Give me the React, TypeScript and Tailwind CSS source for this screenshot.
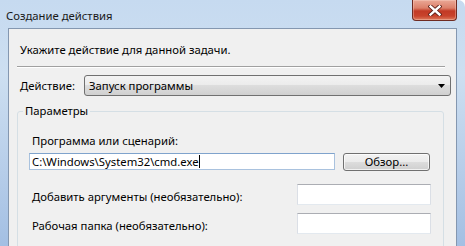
import React from 'react';

function CloseGlyph() {
  return (
    <svg width="14" height="11" viewBox="0 0 14 11">
      <path d="M2.5 1.5 L11.5 9.5 M11.5 1.5 L2.5 9.5" stroke="#5a1f18" strokeWidth="4.2" strokeLinecap="square" />
      <path d="M2.5 1.5 L11.5 9.5 M11.5 1.5 L2.5 9.5" stroke="#ffffff" strokeWidth="2.4" strokeLinecap="square" />
    </svg>
  );
}

export default function App() {
  return (
    <div className="w-[465px] h-[246px] overflow-hidden bg-white font-['Noto_Sans',sans-serif] text-[11.3px] leading-[16px] text-black">
      <div className="h-full flex flex-col rounded-tr-[7px] bg-[linear-gradient(180deg,#c6daf0_0%,#cddff1_30%,#b6cde9_70%,#a3bfe3_100%)]">
        {/* title bar */}
        <div className="h-[28px] flex items-start shrink-0">
          <span className="ml-[6px] mt-[8px] text-[#1a1a1a]">Создание действия</span>
          <div className="ml-auto mr-[8px] w-[45px] h-[21px] rounded-b-[4px] border border-t-0 border-[#6e2b22] bg-[linear-gradient(180deg,#eaa896_0%,#dc806a_40%,#c23a25_55%,#c8432c_80%,#dd7b5d_100%)] flex items-center justify-center shadow-[inset_0_0_0_1px_rgba(255,220,210,0.35)]">
            <CloseGlyph />
          </div>
        </div>

        {/* client area */}
        <div className="flex-1 mx-[8px] border border-b-0 border-[#8497b0] bg-[#f0f0f0] flex flex-col">
          <p className="ml-[11px] mt-[13px]">Укажите действие для данной задачи.</p>
          <div className="ml-[8px] mr-[11px] mt-[8px] h-[2px] border-t border-[#a0a0a0] border-b border-b-white" />

          <div className="mt-[7px] flex items-center">
            <span className="ml-[11px] w-[64px]">Действие:</span>
            <div className="w-[367px] h-[21px] rounded-[3px] border border-[#707070] bg-[linear-gradient(180deg,#f3f3f3_0%,#ebebeb_50%,#dddddd_50%,#d0d0d0_100%)] flex items-center justify-between pl-[4px] pr-[5px]">
              <span>Запуск программы</span>
              <svg width="7" height="4" viewBox="0 0 7 4">
                <path d="M0 0 H7 L3.5 4 Z" fill="#000" />
              </svg>
            </div>
          </div>

          <fieldset className="mt-[7px] ml-[8px] mr-[12px] rounded-[3px] border border-[#d5dfe5] p-0 pb-[20px]">
            <legend className="ml-[5px] px-[2px]">Параметры</legend>
            <div className="pl-[11px] pr-[12px] pt-[14px]">
              <p className="ml-[3px]">Программа или сценарий:</p>
              <div className="mt-[4px] flex items-start">
                <div className="w-[306px] h-[17px] bg-white border border-[#a9c2de] border-t-[#7fa3cc] flex items-center pl-[2px]">
                  <span>C:\Windows\System32\cmd.exe</span>
                  <span className="w-px h-[13px] bg-black" />
                </div>
                <div className="ml-[8px] w-[87px] h-[18px] rounded-[3px] border border-[#707070] bg-[linear-gradient(180deg,#f3f3f3_0%,#ebebeb_50%,#dddddd_50%,#cfcfcf_100%)] shadow-[inset_0_0_0_1px_rgba(255,255,255,0.7)] flex items-center justify-center">
                  Обзор...
                </div>
              </div>
              <div className="mt-[13px] flex items-start justify-between">
                <span className="ml-[3px] mt-[5px]">Добавить аргументы (необязательно):</span>
                <div className="w-[134px] h-[21px] bg-white border border-[#dbdfe6] border-t-[#abadb3] border-b-[#e3e9ef]" />
              </div>
              <div className="mt-[8px] flex items-start justify-between">
                <span className="ml-[3px] mt-[5px]">Рабочая папка (необязательно):</span>
                <div className="w-[134px] h-[21px] bg-white border border-[#dbdfe6] border-t-[#abadb3] border-b-[#e3e9ef]" />
              </div>
            </div>
          </fieldset>
        </div>
      </div>
    </div>
  );
}
